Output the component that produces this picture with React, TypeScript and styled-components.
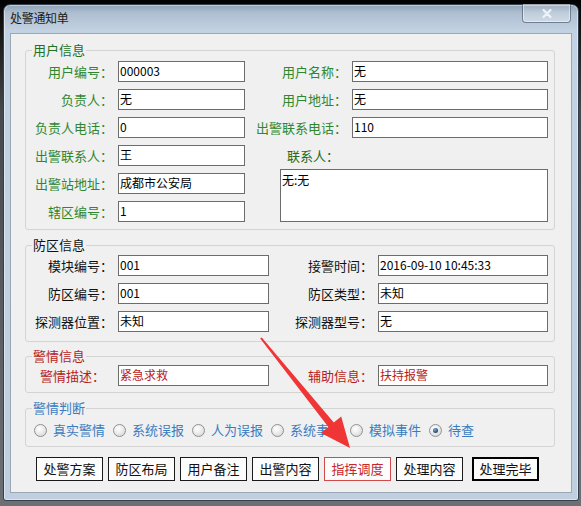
import React from "react";
import styled, { createGlobalStyle } from "styled-components";

const Global = createGlobalStyle`
  html, body { margin: 0; padding: 0; }
  body {
    width: 581px;
    height: 506px;
    overflow: hidden;
    background: linear-gradient(180deg, #020202 0px, #111 24px, #45484c 110px, #6c6f73 100%);
    font-family: "Noto Sans CJK SC", "Noto Sans", sans-serif;
  }
`;

const Stage = styled.div`
  position: relative;
  width: 581px;
  height: 506px;
  box-sizing: border-box;
  padding: 4px 0 0 3px;
`;

const Window = styled.div`
  width: 576px;
  height: 497px;
  box-sizing: border-box;
  border: 1px solid #34404e;
  border-radius: 7px 7px 3px 3px;
  background: linear-gradient(180deg, #8fa2b6 0px, #aebfd1 8px, #c3d2e2 26px, #c4d3e3 60px, #bfcfdf 100%);
  box-shadow: inset 0 0 0 1px rgba(255, 255, 255, 0.45);
  display: flex;
  flex-direction: column;
`;

const TitleBar = styled.div`
  height: 28px;
  display: flex;
  justify-content: space-between;
  align-items: flex-start;
  padding: 0 7px 0 6px;
`;

const Title = styled.div`
  margin-top: 5px;
  font-size: 12px;
  line-height: 16px;
  color: #1a1a1a;
  letter-spacing: -0.3px;
`;

const CloseBtn = styled.div`
  width: 49px;
  height: 19px;
  margin-top: -1px;
  box-sizing: border-box;
  border: 1px solid rgba(55, 70, 90, 0.6);
  border-top: none;
  border-radius: 0 0 4px 4px;
  background: linear-gradient(180deg, rgba(255, 255, 255, 0.12), rgba(255, 255, 255, 0.32));
  box-shadow: inset 0 0 0 1px rgba(255, 255, 255, 0.45);
  display: flex;
  align-items: center;
  justify-content: center;
`;

const Client = styled.div`
  margin: 0 6px 0 6px;
  height: 460px;
  box-sizing: border-box;
  border: 1px solid #9ba7b5;
  background: #f0f0f0;
  padding: 9px 16px 0 14px;
  display: flex;
  flex-direction: column;
`;

const Group = styled.fieldset<{ $mt: number; $pt: number; $pb: number }>`
  margin: ${(p) => p.$mt}px 0 0 0;
  padding: ${(p) => p.$pt}px 6px ${(p) => p.$pb}px 0;
  border: 1px solid #d4d4d4;
  border-radius: 3px;
  min-width: 0;
`;

const Legend = styled.legend<{ $color: string }>`
  margin-left: 6px;
  padding: 0 1px;
  font-size: 13px;
  line-height: 14px;
  color: ${(p) => p.$color};
`;

const FormGrid = styled.div<{ $cols: string }>`
  display: grid;
  grid-template-columns: ${(p) => p.$cols};
  grid-auto-rows: 21px;
  column-gap: 5px;
  row-gap: 7px;
`;

const Label = styled.div<{ $color: string; $pr?: number }>`
  text-align: right;
  font-size: 13px;
  line-height: 21px;
  white-space: nowrap;
  color: ${(p) => p.$color};
  padding-right: ${(p) => p.$pr ?? 0}px;
`;

const TextBox = styled.div<{ $color?: string }>`
  height: 21px;
  box-sizing: border-box;
  border: 1px solid #6c6c6c;
  background: #fff;
  font-size: 12px;
  line-height: 18px;
  padding: 0 1px;
  color: ${(p) => p.$color ?? "#000"};
  white-space: pre;
  overflow: hidden;
`;

const MemoBox = styled.div`
  grid-column: 3 / 5;
  grid-row: 5 / 7;
  margin: -4px 0 0 30px;
  box-sizing: border-box;
  border: 1px solid #6c6c6c;
  background: #fff;
  font-size: 12px;
  line-height: 18px;
  padding: 1px 1px;
`;

const RadioRow = styled.div`
  display: flex;
  align-items: center;
  height: 20px;
  padding-left: 8px;
  gap: 8px;
`;

const RadioItem = styled.div`
  display: flex;
  align-items: center;
  gap: 6px;
  font-size: 13px;
  line-height: 20px;
  color: #3a7cc0;
  white-space: nowrap;
`;

const RadioDot = styled.span<{ $checked?: boolean }>`
  width: 13px;
  height: 13px;
  box-sizing: border-box;
  border-radius: 50%;
  border: 1px solid #8f9193;
  background: radial-gradient(circle at 40% 35%, #ffffff 0%, #eeeeee 40%, #cfd0d1 100%);
  display: flex;
  align-items: center;
  justify-content: center;
  &::after {
    content: "";
    display: ${(p) => (p.$checked ? "block" : "none")};
    width: 5px;
    height: 5px;
    border-radius: 50%;
    background: radial-gradient(circle at 40% 35%, #7fb0d8 0%, #2d5a82 55%, #12324f 100%);
  }
`;

const ButtonRow = styled.div`
  display: flex;
  gap: 5px;
  margin-top: 10px;
  padding-left: 11px;
`;

const Btn = styled.button<{ $variant?: "alert" | "primary" }>`
  width: 67px;
  height: 24px;
  box-sizing: border-box;
  padding: 0;
  background: #fcfcfc;
  font-family: "Noto Sans CJK SC", sans-serif;
  font-size: 13px;
  line-height: 20px;
  color: ${(p) => (p.$variant === "alert" ? "#c7262a" : "#111")};
  border: ${(p) =>
    p.$variant === "alert"
      ? "1px solid #d24a4a"
      : p.$variant === "primary"
      ? "2px solid #000"
      : "1px solid #1a1a1a"};
  margin-left: ${(p) => (p.$variant === "primary" ? "4px" : "0")};
`;

const ArrowLayer = styled.svg`
  position: absolute;
  left: 0;
  top: 0;
  width: 581px;
  height: 506px;
  pointer-events: none;
`;

const GREEN = "#2f872f";
const BLACK = "#111";
const RED = "#b81c20";
const BLUE = "#3a7cc0";

const radios = [
  { t: "真实警情" },
  { t: "系统误报" },
  { t: "人为误报" },
  { t: "系统事件" },
  { t: "模拟事件" },
  { t: "待查", checked: true },
];

const buttons: { t: string; v?: "alert" | "primary" }[] = [
  { t: "处警方案" },
  { t: "防区布局" },
  { t: "用户备注" },
  { t: "出警内容" },
  { t: "指挥调度", v: "alert" },
  { t: "处理内容" },
  { t: "处理完毕", v: "primary" },
];

export default function App() {
  return (
    <>
      <Global />
      <Stage>
        <Window>
          <TitleBar>
            <Title>处警通知单</Title>
            <CloseBtn>
              <svg width="10" height="9" viewBox="0 0 10 9">
                <path d="M1.5 1 L8.5 8 M8.5 1 L1.5 8" stroke="#eef3f8" strokeWidth="2.2" strokeLinecap="round" />
              </svg>
            </CloseBtn>
          </TitleBar>
          <Client>
            <Group $mt={0} $pt={4} $pb={7}>
              <Legend $color="#237023">用户信息</Legend>
              <FormGrid $cols="87px 127px 97px 196px">
                <Label $color={GREEN}>用户编号：</Label>
                <TextBox>000003</TextBox>
                <Label $color={GREEN}>用户名称：</Label>
                <TextBox>无</TextBox>

                <Label $color={GREEN}>负责人：</Label>
                <TextBox>无</TextBox>
                <Label $color={GREEN}>用户地址：</Label>
                <TextBox>无</TextBox>

                <Label $color={GREEN}>负责人电话：</Label>
                <TextBox>0</TextBox>
                <Label $color={GREEN}>出警联系电话：</Label>
                <TextBox>110</TextBox>

                <Label $color={GREEN}>出警联系人：</Label>
                <TextBox>王</TextBox>
                <Label $color="#236b23" $pr={8}>联系人：</Label>
                <div />

                <Label $color={GREEN}>出警站地址：</Label>
                <TextBox>成都市公安局</TextBox>
                <MemoBox>无:无</MemoBox>

                <Label $color={GREEN}>辖区编号：</Label>
                <TextBox>1</TextBox>
              </FormGrid>
            </Group>

            <Group $mt={8} $pt={3} $pb={9}>
              <Legend $color={BLACK}>防区信息</Legend>
              <FormGrid $cols="87px 151px 99px 170px">
                <Label $color={BLACK}>模块编号：</Label>
                <TextBox>001</TextBox>
                <Label $color={BLACK}>接警时间：</Label>
                <TextBox>2016-09-10 10:45:33</TextBox>

                <Label $color={BLACK}>防区编号：</Label>
                <TextBox>001</TextBox>
                <Label $color={BLACK}>防区类型：</Label>
                <TextBox>未知</TextBox>

                <Label $color={BLACK}>探测器位置：</Label>
                <TextBox>未知</TextBox>
                <Label $color={BLACK}>探测器型号：</Label>
                <TextBox>无</TextBox>
              </FormGrid>
            </Group>

            <Group $mt={7} $pt={2} $pb={6}>
              <Legend $color={RED}>警情信息</Legend>
              <FormGrid $cols="87px 151px 99px 170px">
                <Label $color={RED} $pr={8}>警情描述：</Label>
                <TextBox $color={RED}>紧急求救</TextBox>
                <Label $color={RED}>辅助信息：</Label>
                <TextBox $color={RED}>扶持报警</TextBox>
              </FormGrid>
            </Group>

            <Group $mt={8} $pt={5} $pb={6}>
              <Legend $color={BLUE}>警情判断</Legend>
              <RadioRow>
                {radios.map((r) => (
                  <RadioItem key={r.t}>
                    <RadioDot $checked={r.checked} />
                    {r.t}
                  </RadioItem>
                ))}
              </RadioRow>
            </Group>

            <ButtonRow>
              {buttons.map((b) => (
                <Btn key={b.t} $variant={b.v}>
                  {b.t}
                </Btn>
              ))}
            </ButtonRow>
          </Client>
        </Window>
        <ArrowLayer viewBox="0 0 581 506">
          <polygon
            points="260.2,338.6 328.4,426.9 321.0,432.9 350,448 341.2,416.5 333.8,422.5 261.8,337.4"
            fill="#ef3535"
          />
        </ArrowLayer>
      </Stage>
    </>
  );
}
